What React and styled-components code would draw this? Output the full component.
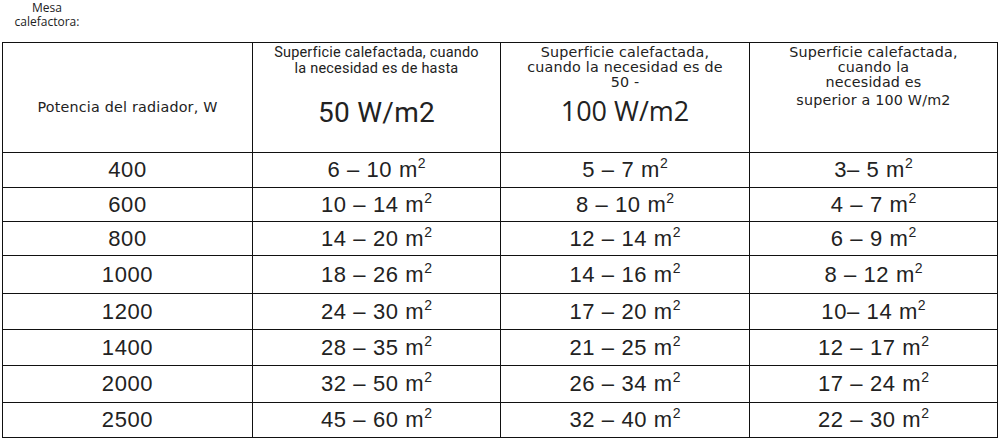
import React from 'react';
import styled, { createGlobalStyle } from 'styled-components';

const GlobalStyle = createGlobalStyle`
  html, body {
    margin: 0;
    padding: 0;
    background: #fff;
  }
  body {
    font-family: "Liberation Sans", Arial, sans-serif;
    color: #222;
  }
`;

const rows = [
  { power: '400', h: 35, cells: ['6 – 10', '5 – 7', '3– 5'] },
  { power: '600', h: 34, cells: ['10 – 14', '8 – 10', '4 – 7'] },
  { power: '800', h: 34, cells: ['14 – 20', '12 – 14', '6 – 9'] },
  { power: '1000', h: 38, cells: ['18 – 26', '14 – 16', '8 – 12'] },
  { power: '1200', h: 36, cells: ['24 – 30', '17 – 20', '10– 14'] },
  { power: '1400', h: 36, cells: ['28 – 35', '21 – 25', '12 – 17'] },
  { power: '2000', h: 37, cells: ['32 – 50', '26 – 34', '17 – 24'] },
  { power: '2500', h: 35, cells: ['45 – 60', '32 – 40', '22 – 30'] },
];

const App = () => {
  return (
    <>
      <GlobalStyle />
      <Page>
        <TitleBar>
          <Title>
            Mesa
            <br />
            calefactora:
          </Title>
        </TitleBar>
        <Table>
          <colgroup>
            <col style={{ width: 250 }} />
            <col style={{ width: 248 }} />
            <col style={{ width: 249 }} />
            <col style={{ width: 248 }} />
          </colgroup>
          <thead>
            <tr>
              <HeadCell $align="middle">
                <GeoText>Potencia del radiador, W</GeoText>
              </HeadCell>
              <HeadCell>
                <RoboText>
                  Superficie calefactada, cuando
                  <br />
                  la necesidad es de hasta
                </RoboText>
                <RoboBig>50 W/m2</RoboBig>
              </HeadCell>
              <HeadCell>
                <GeoText>
                  Superficie calefactada,
                  <br />
                  cuando la necesidad es de
                  <br />
                  50 -
                </GeoText>
                <GeoBig>100 W/m2</GeoBig>
              </HeadCell>
              <HeadCell>
                <GeoText>
                  Superficie calefactada,
                  <br />
                  cuando la
                  <br />
                  necesidad es
                  <br />
                  <Gap>superior a 100 W/m2</Gap>
                </GeoText>
              </HeadCell>
            </tr>
          </thead>
          <tbody>
            {rows.map((r) => (
              <tr key={r.power}>
                <Cell $h={r.h}>{r.power}</Cell>
                {r.cells.map((c, i) => (
                  <Cell key={i} $h={r.h}>
                    {c} m<Sup>2</Sup>
                  </Cell>
                ))}
              </tr>
            ))}
          </tbody>
        </Table>
      </Page>
    </>
  );
};

export default App;

const Page = styled.div`
  width: 1001px;
  height: 441px;
  padding: 0 3px 0 2px;
  box-sizing: border-box;
  overflow: hidden;
`;

const TitleBar = styled.div`
  height: 42px;
  display: flex;
  align-items: flex-start;
`;

const Title = styled.div`
  width: 90px;
  padding-top: 1px;
  text-align: center;
  font-family: "Open Sans", "Noto Sans", sans-serif;
  font-size: 12px;
  line-height: 14px;
  color: #222;
`;

const Table = styled.table`
  width: 996px;
  table-layout: fixed;
  border-collapse: collapse;
  border: 1.5px solid #111;
`;

const HeadCell = styled.th`
  height: 110px;
  padding: ${(p) => (p.$align === 'middle' ? '20px 2px 0' : '2px 2px 0')};
  box-sizing: border-box;
  border: 1.5px solid #111;
  vertical-align: ${(p) => (p.$align === 'middle' ? 'middle' : 'top')};
  text-align: center;
  font-weight: normal;
  color: #222;
`;

const GeoText = styled.div`
  font-family: "DejaVu Sans", "Open Sans", sans-serif;
  font-size: 14.3px;
  letter-spacing: 0.2px;
  line-height: 15px;
  color: #222;
`;

const Gap = styled.span`
  display: inline-block;
  margin-top: 3px;
`;

const GeoBig = styled.div`
  font-family: "Open Sans", "Noto Sans", sans-serif;
  font-size: 27px;
  line-height: 32px;
  margin-top: 5px;
  color: #222;
`;

const RoboText = styled.div`
  font-family: Roboto, "Liberation Sans", sans-serif;
  font-size: 14.5px;
  letter-spacing: 0.2px;
  line-height: 16px;
  color: #222;
`;

const RoboBig = styled.div`
  font-family: Roboto, "Liberation Sans", sans-serif;
  font-size: 28px;
  line-height: 32px;
  margin-top: 20px;
  letter-spacing: 0.3px;
  color: #222;
`;

const Cell = styled.td`
  height: ${(p) => p.$h}px;
  padding: 0;
  box-sizing: border-box;
  border: 1.5px solid #111;
  text-align: center;
  vertical-align: middle;
  font-family: "Liberation Sans", Arial, sans-serif;
  font-size: 22px;
  letter-spacing: 0.6px;
  color: #222;
`;

const Sup = styled.sup`
  font-size: 14px;
  line-height: 0;
  vertical-align: 9px;
  letter-spacing: 0;
`;
